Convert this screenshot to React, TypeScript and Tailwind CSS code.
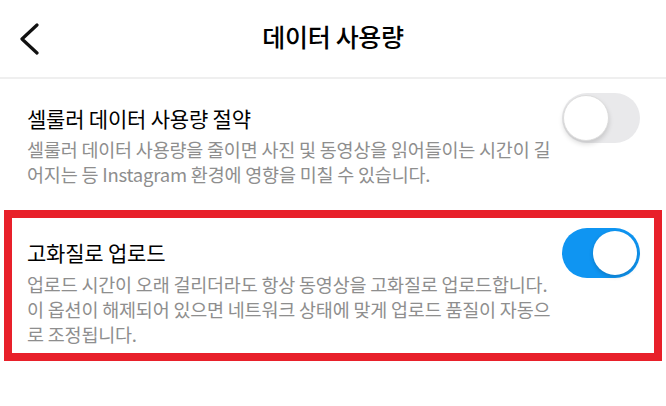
import React from "react";

function Toggle({ on }: { on: boolean }) {
  return (
    <div
      className={
        on
          ? "relative w-[78px] h-[50px] rounded-full bg-[#0f95f2] shrink-0"
          : "relative w-[78px] h-[50px] rounded-full bg-[#e9e9eb] shrink-0"
      }
    >
      <div
        className={
          on
            ? "absolute top-[3px] right-[3px] w-[44px] h-[44px] rounded-full bg-white shadow-[0_2px_4px_rgba(0,0,0,0.18)]"
            : "absolute top-[2px] left-[1px] w-[46px] h-[46px] rounded-full bg-white border border-[#dcdcdc] shadow-[0_3px_5px_rgba(0,0,0,0.15)]"
        }
      />
    </div>
  );
}

export default function App() {
  return (
    <div className="w-[666px] h-[406px] bg-white overflow-hidden font-['Noto_Sans_CJK_KR',sans-serif] text-black">
      <div className="h-[79px] grid grid-cols-[1fr_auto_1fr] items-center border-b-2 border-[#efefef]">
        <div className="pl-[19px] flex items-center">
          <svg width="22" height="32" viewBox="0 0 22 32" fill="none">
            <path d="M18 2 L3 16 L18 30" stroke="#111" strokeWidth="3.2" strokeLinecap="round" strokeLinejoin="round" />
          </svg>
        </div>
        <div className="text-[25px] font-medium leading-none tracking-[-0.3px] pb-[4px]">데이터 사용량</div>
        <div />
      </div>

      <div className="flex items-start justify-between pl-[27px] pr-[26px] pt-[24px]">
        <div>
          <div className="text-[21px] leading-[30px] tracking-[-0.2px]">셀룰러 데이터 사용량 절약</div>
          <div className="text-[18.5px] leading-[25px] text-[#8e8e8e] tracking-[-0.2px] mt-[4px]">
            <div>셀룰러 데이터 사용량을 줄이면 사진 및 동영상을 읽어들이는 시간이 길</div>
            <div>어지는 등 Instagram 환경에 영향을 미칠 수 있습니다.</div>
          </div>
        </div>
        <div className="-mt-[10px]">
          <Toggle on={false} />
        </div>
      </div>

      <div className="mt-[23px] mx-[4px] w-[658px] border-8 border-[#e8202a]">
        <div className="flex items-start justify-between pl-[15px] pr-[14px] pt-[19px] pb-[6px]">
          <div>
            <div className="text-[21px] leading-[30px] tracking-[-0.2px]">고화질로 업로드</div>
            <div className="text-[18.5px] leading-[25px] text-[#8e8e8e] tracking-[-0.2px] mt-[5px]">
              <div>업로드 시간이 오래 걸리더라도 항상 동영상을 고화질로 업로드합니다.</div>
              <div>이 옵션이 해제되어 있으면 네트워크 상태에 맞게 업로드 품질이 자동으</div>
              <div>로 조정됩니다.</div>
            </div>
          </div>
          <div className="-mt-[9px]">
            <Toggle on={true} />
          </div>
        </div>
      </div>
    </div>
  );
}
